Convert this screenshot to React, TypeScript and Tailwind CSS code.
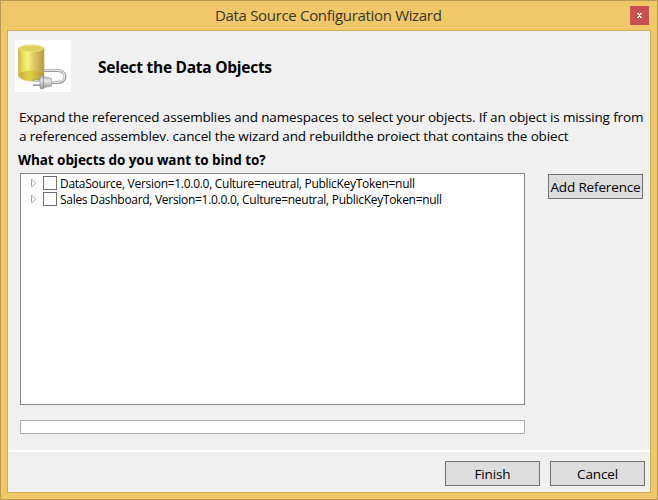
import React from 'react';

function DataSourceIcon() {
  return (
    <svg width="56" height="52" viewBox="0 0 56 52" className="block">
      <defs>
        <linearGradient id="body" x1="0" x2="1" y1="0" y2="0">
          <stop offset="0" stopColor="#cdbb45" />
          <stop offset="0.2" stopColor="#ece45c" />
          <stop offset="0.36" stopColor="#f6f27c" />
          <stop offset="0.6" stopColor="#ddca63" />
          <stop offset="1" stopColor="#b79a42" />
        </linearGradient>
        <linearGradient id="base" x1="0" x2="1" y1="0" y2="0">
          <stop offset="0" stopColor="#c5ab35" />
          <stop offset="0.45" stopColor="#e2d043" />
          <stop offset="1" stopColor="#b9973a" />
        </linearGradient>
        <linearGradient id="plug" x1="0" x2="0" y1="0" y2="1">
          <stop offset="0" stopColor="#a0a0a0" />
          <stop offset="0.35" stopColor="#e9e9e9" />
          <stop offset="1" stopColor="#949494" />
        </linearGradient>
      </defs>
      <path d="M3.5 9C3.5 4 29 4 29 9V36C27 42 7 43 3.5 36Z" fill="url(#body)" stroke="#c3b154" strokeWidth="0.7" />
      <path d="M3.5 35C6 29 26 29 29 35C27 42.5 7 42.5 3.5 35Z" fill="url(#base)" />
      <ellipse cx="16.2" cy="8.600" rx="12.2" ry="3" fill="#ddd45d" stroke="#ebe272" strokeWidth="0.8" />
      <path d="M29 30.5H42C52.500 30.5 52.500 42.500 43 42.500H37" fill="none" stroke="#999" strokeWidth="3" />
      <path d="M29 30.300H42C52 30.300 52 42.200 43 42.200H37" fill="none" stroke="#e2e2e2" strokeWidth="1.500" />
      <path d="M18 40.500H26M18 45H26" stroke="#8a8a8a" strokeWidth="2.200" />
      <path d="M18.500 40.300H26M18.500 44.800H26" stroke="#ddd" strokeWidth="0.900" />
      <path d="M25 36L28 35.500L29 37L36.500 38.500V46L29 47.500L28 49L25 48.500Z" fill="url(#plug)" stroke="#949494" strokeWidth="0.700" />
      <path d="M28.300 36.500V48" stroke="#8a8a8a" strokeWidth="0.800" />
    </svg>
  );
}

function TreeRow({ label, spacing }: { label: string; spacing: string }) {
  return (
    <div className="flex h-4 items-center">
      <svg width="6" height="10" viewBox="0 0 6 10" className="ml-[10px] shrink-0">
        <path d="M0.500 1.200V8.800L4.900 5Z" fill="#fff" stroke="#a6a6a6" />
      </svg>
      <span className="ml-[6px] size-[14px] shrink-0 border border-[#707070] bg-white" />
      <span className={`ml-[3px] whitespace-nowrap pt-[2px] text-[12px] leading-4 ${spacing}`}>{label}</span>
    </div>
  );
}

function Button({ children, className = '' }: { children: React.ReactNode; className?: string }) {
  return (
    <button
      className={`flex h-[25px] w-[95px] shrink-0 items-center justify-center whitespace-nowrap border border-[#707070] bg-[#ddd] pt-[2px] text-[13.500px] leading-none tracking-[-0.150px] ${className}`}
    >
      {children}
    </button>
  );
}

export default function App() {
  return (
    <div className="flex h-[500px] w-[658px] flex-col border border-[#b89a4e] bg-[#f0c869] px-[6px] pb-[6px] font-['Open_Sans','Noto_Sans',sans-serif] text-black">
      <header className="flex h-[29px] shrink-0">
        <h1 className="ml-[208px] mt-[3px] w-[415px] whitespace-nowrap text-[15px] leading-[22px] tracking-[-0.320px] text-[#3a3527]">
          Data Source Configuration Wizard
        </h1>
        <button aria-label="Close" className="mt-[5px] flex size-[19px] items-center justify-center bg-[#c75050]">
          <svg width="5" height="5" viewBox="0 0 5 5" shapeRendering="crispEdges">
            <path d="M0 0H2V1H3V0H5V1H4V2H3V3H4V4H5V5H3V4H2V5H0V4H1V3H2V2H1V1H0Z" fill="#fff" />
          </svg>
        </button>
      </header>
      <main className="flex h-[463px] w-[644px] shrink-0 flex-col border border-[#cfab56] bg-[#f0f0f0]">
        <div className="ml-[7px] mt-[9px] flex h-[52px] shrink-0">
          <div className="w-[56px] bg-white">
            <DataSourceIcon />
          </div>
          <h2 className="ml-[27px] mt-[17px] whitespace-nowrap text-[15.500px] font-bold leading-[20px] tracking-[-0.260px]">
            Select the Data Objects
          </h2>
        </div>
        <div className="ml-[11px] mt-[16px] h-[33px] shrink-0 overflow-hidden whitespace-nowrap text-[13.500px] leading-[19px]">
          <p className="tracking-[-0.145px]">
            Expand the referenced assemblies and namespaces to select your objects. If an object is missing from
          </p>
          <p className="tracking-[-0.140px]">
            a referenced assembley, cancel the wizard and rebuildthe project that contains the object
          </p>
        </div>
        <h3 className="ml-[10px] mt-[10px] h-[18px] shrink-0 whitespace-nowrap text-[13.500px] font-bold leading-[18px] tracking-[-0.070px]">
          What objects do you want to bind to?
        </h3>
        <div className="ml-3 mt-[4px] flex h-[232px] shrink-0">
          <div className="w-[505px] border border-[#828790] bg-white pt-px">
            <TreeRow label="DataSource, Version=1.0.0.0, Culture=neutral, PublicKeyToken=null" spacing="tracking-[-0.290px]" />
            <TreeRow label="Sales Dashboard, Version=1.0.0.0, Culture=neutral, PublicKeyToken=null" spacing="tracking-[-0.295px]" />
          </div>
          <Button className="ml-[23px] mt-px">Add Reference</Button>
        </div>
        <div className="ml-3 mt-[15px] h-[14px] w-[505px] shrink-0 border border-[#abadb3] bg-white" />
        <footer className="mt-4 flex h-[42px] shrink-0 justify-end gap-[10px] border-t-2 border-white pr-[5px] pt-[9px]">
          <Button>Finish</Button>
          <Button>Cancel</Button>
        </footer>
      </main>
    </div>
  );
}
